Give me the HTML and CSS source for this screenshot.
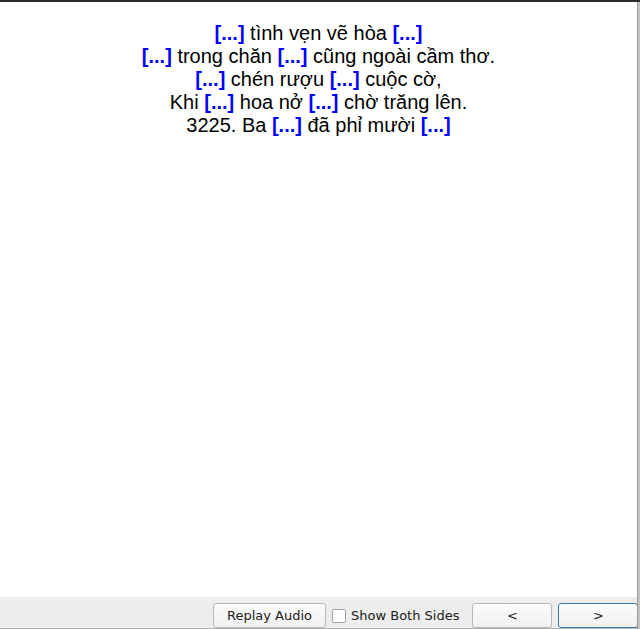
FILE: index.html
```html
<!DOCTYPE html>
<html lang="vi">
<head>
<meta charset="utf-8">
<link rel="stylesheet" href="styles.css">
</head>
<body>
<div class="window">
  <div class="main">
    <div class="card">
      <span class="cloze">[...]</span> tình vẹn vẽ hòa <span class="cloze">[...]</span><br>
      <span class="cloze">[...]</span> trong chăn <span class="cloze">[...]</span> cũng ngoài cầm thơ.<br>
      <span class="cloze">[...]</span> chén rượu <span class="cloze">[...]</span> cuộc cờ,<br>
      Khi <span class="cloze">[...]</span> hoa nở <span class="cloze">[...]</span> chờ trăng lên.<br>
      3225. Ba <span class="cloze">[...]</span> đã phỉ mười <span class="cloze">[...]</span>
    </div>
  </div>
  <div class="bar">
    <button class="btn replay">Replay Audio</button>
    <label class="check"><span class="box"></span>Show Both Sides</label>
    <button class="btn nav">&lt;</button>
    <button class="btn nav focus">&gt;</button>
  </div>
</div>
<div class="edge"></div>
</body>
</html>
```
FILE: styles.css
```css
html, body {
  margin: 0;
  padding: 0;
  width: 640px;
  height: 629px;
  overflow: hidden;
  background: #ffffff;
}
body {
  display: flex;
  border-top: 2px solid #2a2a33;
  box-sizing: border-box;
}
.window {
  width: 637px;
  height: 627px;
  display: flex;
  flex-direction: column;
  flex-shrink: 0;
}
.edge {
  width: 3px;
  height: 627px;
  background: #c4c4c4;
  border-left: 1px solid #9a9a9a;
  box-sizing: border-box;
  flex-shrink: 0;
}
.main {
  flex: 1;
  background: #ffffff;
}
.card {
  padding-top: 20px;
  text-align: center;
  font-family: "Liberation Sans", Arial, sans-serif;
  font-size: 20px;
  line-height: 23px;
  color: #000000;
}
.cloze {
  font-weight: bold;
  color: #0000ff;
}
.bar {
  height: 32px;
  box-sizing: border-box;
  background: #ededed;
  border-bottom: 1px solid #b0b0b0;
  display: flex;
  align-items: flex-end;
  padding: 0 0 0 213px;
  font-family: "DejaVu Sans", sans-serif;
  font-size: 13px;
  color: #202020;
  white-space: nowrap;
}
.btn {
  height: 25px;
  box-sizing: border-box;
  border: 1px solid #b8b8b8;
  border-radius: 3px;
  background: linear-gradient(#fbfbfb, #f1f1f1);
  font-family: "DejaVu Sans", sans-serif;
  font-size: 13px;
  color: #202020;
  padding: 0;
  flex-shrink: 0;
}
.replay {
  width: 113px;
}
.check {
  display: flex;
  align-items: center;
  height: 25px;
  margin-left: 6px;
  margin-right: 13px;
  flex-shrink: 0;
}
.box {
  width: 14px;
  height: 14px;
  box-sizing: border-box;
  border: 1px solid #a0a0a0;
  border-radius: 2px;
  background: #ffffff;
  margin-right: 5px;
}
.nav {
  width: 80px;
}
.nav + .nav {
  margin-left: 6px;
}
.focus {
  border-color: #3b7bb0;
  width: 80px;
}
```
